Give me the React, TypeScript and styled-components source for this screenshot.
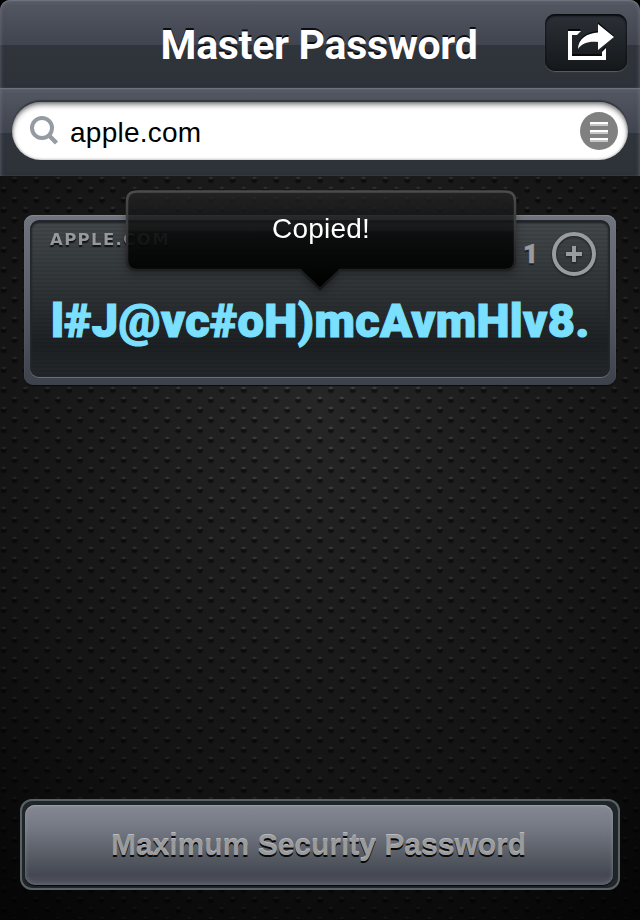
import React from "react";
import styled, { createGlobalStyle } from "styled-components";

const GlobalStyle = createGlobalStyle`
  * { box-sizing: border-box; }
  html, body { margin: 0; background: #000; }
  button, input { font: inherit; border: 0; padding: 0; margin: 0; outline: 0; }
`;

const Screen = styled.div`
  width: 640px;
  height: 920px;
  display: flex;
  flex-direction: column;
  overflow: hidden;
  font-family: "Liberation Sans", Arial, sans-serif;
  background: #000;
`;

const Bar = styled.div<{ $rounded?: boolean }>`
  flex: none;
  height: 88px;
  border-radius: ${(p) => (p.$rounded ? "10px 10px 0 0" : "0")};
  background: linear-gradient(#535863 0, #40444f 45px, #30343b 45px, #2d3138 100%);
  box-shadow: inset 0 1px 1px #70757f, inset 0 2px 4px rgba(130, 136, 150, 0.25),
    inset 3px 0 4px -2px rgba(130, 136, 150, 0.25), inset -3px 0 4px -2px rgba(130, 136, 150, 0.25);
`;

const TitleBar = styled(Bar)`
  display: grid;
  grid-template-columns: 95px 1fr 95px;
  align-items: center;
`;

const Title = styled.h1`
  grid-column: 2;
  margin: 2px 0 0 -2px;
  font: 700 41px/48px Roboto, sans-serif;
  letter-spacing: -0.3px;
  text-align: center;
  white-space: nowrap;
  color: #fff;
  text-shadow: 0 -2px 0 #0c0e13;
`;

const ShareButton = styled.button`
  width: 82px;
  height: 57px;
  margin: -4px 0 0;
  border-radius: 10px;
  background: linear-gradient(#2b3037, #14181a);
  box-shadow: inset 0 2px 2px #090b0e, inset 0 0 2px #0c0e10, 0 1px 1px #5a5e66;
`;

const ShareGlyph = styled.svg`
  display: block;
  margin: 1px 0 0 17px;
  overflow: visible;
`;

const SearchBar = styled(Bar)`
  padding: 14px 12px 16px;
`;

const SearchField = styled.label`
  height: 58px;
  display: flex;
  align-items: center;
  padding: 0 10px 0 17px;
  border-radius: 29px;
  background: #fff;
  box-shadow: inset 0 3px 5px rgba(0, 0, 0, 0.45), inset 0 0 3px rgba(0, 0, 0, 0.35), 0 -2px 1px #34373f;
`;

const SearchInput = styled.input`
  flex: 1;
  min-width: 0;
  margin: 4px 0 0 10px;
  background: transparent;
  color: #000;
  font-size: 28px;
  letter-spacing: 0.25px;
  line-height: 34px;
`;

/* Dimpled metal: two staggered rows of studs, each a highlight above a shadow. */
const Content = styled.main`
  position: relative;
  flex: 1;
  display: flex;
  flex-direction: column;
  justify-content: space-between;
  padding: 39px 20px 30px;
  background:
    radial-gradient(ellipse 440px 500px at 50% 225px, transparent 0, rgba(0, 0, 0, 0.5) 80%, rgba(0, 0, 0, 0.88) 125%),
    radial-gradient(ellipse 3px 1.8px at 50% 50%, #4c4c4c 0, #3e3e3e 50%, transparent 100%) -7.2px 2px / 21.82px 20px,
    radial-gradient(ellipse 3.7px 3.2px at 50% 50%, #101010 0, #131313 60%, transparent 100%) -7.2px 4.5px / 21.82px 20px,
    radial-gradient(ellipse 3px 1.8px at 50% 50%, #4c4c4c 0, #3e3e3e 50%, transparent 100%) 3.7px -8px / 21.82px 20px,
    radial-gradient(ellipse 3.7px 3.2px at 50% 50%, #101010 0, #131313 60%, transparent 100%) 3.7px -5.5px / 21.82px 20px,
    #262626;
`;

const Card = styled.section`
  height: 170px;
  margin: 0 4px;
  padding: 5px 6px 8px;
  border-radius: 9px;
  background: linear-gradient(#70747e, #5a5e69 50%, #3d414b);
  box-shadow: inset 0 1px 1px #858a92, 0 1px 1px #0b0b0b;
`;

const CardFace = styled.div`
  height: 157px;
  display: flex;
  flex-direction: column;
  padding: 12px 13px 0 20px;
  border-radius: 9px;
  background:
    repeating-linear-gradient(transparent 0 2px, rgba(0, 0, 0, 0.07) 2px 4px),
    linear-gradient(#43484b, #2f3437 42%, #1d2023 80%, #24282b);
  box-shadow: inset 0 0 0 1px #24272c, inset 0 3px 2px #202328, inset 2px 0 2px #25282c,
    inset -2px 0 2px #25282c, 0 1px 0 #6a6f78;
`;

const CardTop = styled.div`
  height: 46px;
  display: flex;
  align-items: flex-start;
  justify-content: space-between;
`;

const SiteName = styled.span`
  margin-top: 1px;
  font: 700 15px/15px "DejaVu Sans", sans-serif;
  letter-spacing: 1.25px;
  color: #96999b;
  text-shadow: 0 2px 1px #111;
  transform: scaleX(1.1);
  transform-origin: 0 50%;
`;

const Counter = styled.div`
  display: flex;
  align-items: center;
  gap: 13px;
`;

const Count = styled.span`
  margin-top: -3px;
  font: 900 26px/30px Roboto, sans-serif;
  color: #999b9d;
  -webkit-text-stroke: 0.6px #999b9d;
  text-shadow: 0 2px 1px #17191b;
`;

const RoundButton = styled.button`
  width: 46px;
  height: 46px;
  background: transparent;
  filter: drop-shadow(0 1px 1px #16181a);
`;

const Password = styled.output`
  display: block;
  width: 545px;
  margin: 15px 0 0 1px;
  font: 900 47px/56px Roboto, sans-serif;
  letter-spacing: 0.3px;
  white-space: nowrap;
  color: #7be0ff;
  -webkit-text-stroke: 1.1px #7be0ff;
`;

const Tooltip = styled.div`
  position: absolute;
  top: 13px;
  left: 125px;
  width: 392px;
  height: 103px;
  padding-top: 24px;
  text-align: center;
  color: #fff;
  font-size: 28px;
  letter-spacing: 0.2px;
  line-height: 32px;
  filter: drop-shadow(0 3px 4px rgba(0, 0, 0, 0.3));
`;

const TooltipShape = styled.svg`
  position: absolute;
  inset: 0;
`;

const TooltipText = styled.span`
  position: relative;
`;

const ButtonFrame = styled.div`
  height: 91px;
  padding: 6px 7px 5px 5px;
  border-radius: 12px;
  background: #202528;
  box-shadow: inset 0 0 0 2px #596168;
`;

const TypeButton = styled.button`
  display: block;
  width: 588px;
  height: 80px;
  padding: 0 1px 0 0;
  border-radius: 10px;
  background: linear-gradient(#858893, #757984 28%, #555a63 65%, #454852 87%, #50535e);
  box-shadow: inset 0 1px 1px #9a9eaa, inset 0 0 5px rgba(155, 160, 172, 0.45), 0 1px 1px #050607;
  font-size: 30px;
  line-height: 34px;
  font-weight: 700;
  color: #9b9b9b;
  text-shadow: 0 2px 0 #08090b, 0 -1px 0 #b8bbc2;
`;

const ShareIcon = () => (
  <ShareGlyph width="48" height="42" viewBox="0 0 48 42">
    <g fill="#06080a" transform="translate(0 -2)">
      <path d="M6 9H19L15 13H10V34H40V30L44 26V38H6Z" />
      <path d="M16 28C16 17 25 12 36 11V2L52 16L36 29V21C27 20 20 22 16 28Z" />
    </g>
    <g fill="#fff">
      <path d="M6 9H19L15 13H10V34H40V30L44 26V38H6Z" />
      <path d="M16 27C16 17 25 11 36 10.500V2L52 15L36 28V20C27 19 20 21 16 27Z" />
    </g>
  </ShareGlyph>
);

export default function App() {
  return (
    <>
      <GlobalStyle />
      <Screen>
        <TitleBar as="header" $rounded>
          <Title>Master Password</Title>
          <ShareButton aria-label="Share">
            <ShareIcon />
          </ShareButton>
        </TitleBar>
        <SearchBar>
          <SearchField>
            <svg width="31" height="32" viewBox="0 0 31 32" fill="none" stroke="#949ba2">
              <circle cx="13" cy="13" r="10" strokeWidth="4" />
              <path d="M19.500 20L27.500 28" strokeWidth="4.500" />
            </svg>
            <SearchInput defaultValue="apple.com" spellCheck={false} />
            <svg width="38" height="38" viewBox="0 0 38 38">
              <circle cx="19" cy="19" r="19" fill="#808080" />
              <path d="M10 13h18M10 21h18M10 29h18" stroke="#c7c7c7" strokeWidth="2" />
              <path d="M10 11h18M10 19h18M10 27h18" stroke="#fff" strokeWidth="2" />
            </svg>
          </SearchField>
        </SearchBar>
        <Content>
          <Card>
            <CardFace>
              <CardTop>
                <SiteName>APPLE.COM</SiteName>
                <Counter>
                  <Count>1</Count>
                  <RoundButton aria-label="Increment">
                    <svg width="46" height="46" viewBox="0 0 46 46" fill="none" stroke="#999c9e">
                      <circle cx="23" cy="22" r="20" strokeWidth="4" />
                      <path d="M23 14v16M15 22h16" strokeWidth="4" />
                    </svg>
                  </RoundButton>
                </Counter>
              </CardTop>
              <Password>l#J@vc#oH)mcAvmHlv8.</Password>
            </CardFace>
          </Card>
          <Tooltip role="tooltip">
            <TooltipShape width="392" height="103" viewBox="0 0 392 103">
              <defs>
                <linearGradient id="bubbleFill" x1="0" y1="0" x2="0" y2="1">
                  <stop offset="0" stopColor="#282828" stopOpacity=".72" />
                  <stop offset=".39" stopColor="#101111" stopOpacity=".78" />
                  <stop offset=".42" stopColor="#080909" stopOpacity=".85" />
                  <stop offset=".75" stopColor="#040505" stopOpacity=".97" />
                  <stop offset="1" stopColor="#000" />
                </linearGradient>
                <linearGradient id="bubbleEdge" x1="0" y1="0" x2="0" y2="1">
                  <stop offset="0" stopColor="#4c4c4c" />
                  <stop offset=".35" stopColor="#3a3a3a" />
                  <stop offset=".75" stopColor="#242224" />
                  <stop offset="1" stopColor="#151515" />
                </linearGradient>
              </defs>
              <path
                d="M12 2.500H380Q390 2.500 390 12V71Q390 81 380 81H215L195 100 175 81H12Q2 81 2 71V12Q2 2.500 12 2.500Z"
                fill="url(#bubbleFill)" stroke="url(#bubbleEdge)" strokeWidth="2.500"
              />
            </TooltipShape>
            <TooltipText>Copied!</TooltipText>
          </Tooltip>
          <ButtonFrame>
            <TypeButton>Maximum Security Password</TypeButton>
          </ButtonFrame>
        </Content>
      </Screen>
    </>
  );
}
